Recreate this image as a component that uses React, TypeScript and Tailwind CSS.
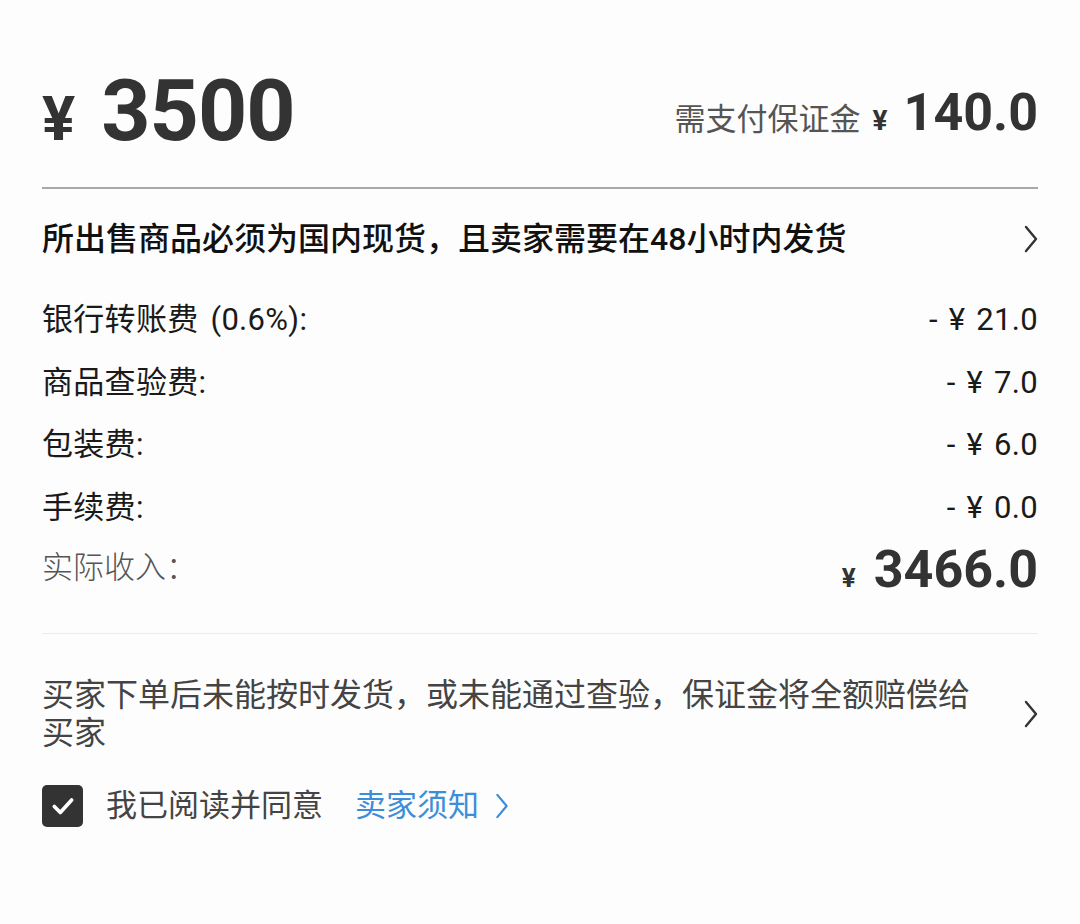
/** Seller listing confirmation: price, fees, deposit notice. */

function Chevron({ className }: { className?: string }) {
  return (
    <svg viewBox="0 0 14 28" className={className} fill="none" stroke="currentColor" strokeWidth="2.4" strokeLinecap="round" strokeLinejoin="round">
      <path d="M2 2 L12 14 L2 26" />
    </svg>
  );
}

const fees = [
  { label: "银行转账费 (0.6%):", value: "- ¥ 21.0" },
  { label: "商品查验费:", value: "- ¥ 7.0" },
  { label: "包装费:", value: "- ¥ 6.0" },
  { label: "手续费:", value: "- ¥ 0.0" },
];

export default function App() {
  return (
    <div
      className="w-[1080px] h-[924px] bg-[#fdfdfd] px-[42px] text-[#1a1a1a]"
      style={{ fontFamily: '"Roboto", "Noto Sans CJK SC", sans-serif' }}
    >
      {/* price header */}
      <div className="flex items-end justify-between pt-[68px] h-[154px]">
        <div className="flex items-baseline text-[#333]">
          <span className="text-[62px] font-bold leading-none">¥</span>
          <span className="ml-[26px] text-[86px] font-bold leading-none tracking-[-1px]">3500</span>
        </div>
        <div className="flex items-baseline text-[#333] mb-[15px]">
          <span className="text-[31px] text-[#555] leading-none">需支付保证金</span>
          <span className="ml-[12px] text-[28px] font-bold leading-none">¥</span>
          <span className="ml-[16px] text-[52px] font-bold leading-none">140.0</span>
        </div>
      </div>

      <div className="mt-[33px] h-[2px] bg-[#a8a8a8]" />

      <div className="flex items-center justify-between h-[100px]">
        <span className="text-[32px] font-medium text-[#111]">所出售商品必须为国内现货，且卖家需要在48小时内发货</span>
        <Chevron className="w-[14px] h-[28px] text-[#333]" />
      </div>

      {fees.map((f) => (
        <div key={f.label} className="flex items-center justify-between h-[62.5px] text-[31px] tracking-[0.3px]">
          <span className="[word-spacing:4px]">{f.label}</span>
          <span className="[word-spacing:3px]">{f.value}</span>
        </div>
      ))}

      <div className="flex items-center justify-between h-[62px]">
        <span className="text-[31px] text-[#555] font-light -mt-[4px]">实际收入：</span>
        <div className="flex items-baseline text-[#333]">
          <span className="text-[26px] font-bold leading-none">¥</span>
          <span className="ml-[18px] text-[52px] font-bold leading-none">3466.0</span>
        </div>
      </div>

      <div className="mt-[32px] h-px bg-[#ececec]" />

      <div className="flex items-center justify-between pt-[42px]">
        <p className="w-[940px] text-[32px] leading-[38px] text-[#444]">
          买家下单后未能按时发货，或未能通过查验，保证金将全额赔偿给买家
        </p>
        <Chevron className="w-[14px] h-[28px] text-[#333]" />
      </div>

      <div className="flex items-center mt-[31px]">
        <div className="w-[41px] h-[42px] rounded-[5px] bg-[#333] flex items-center justify-center">
          <svg viewBox="0 0 24 24" className="w-[26px] h-[26px]" fill="none" stroke="white" strokeWidth="3.4" strokeLinecap="round" strokeLinejoin="round">
            <path d="M4 12.5 L9.5 18 L20 6.5" />
          </svg>
        </div>
        <span className="ml-[23px] text-[31px] text-[#444]">我已阅读并同意</span>
        <span className="ml-[32px] text-[31px] text-[#3d8ed8]">卖家须知</span>
        <Chevron className="ml-[16px] w-[14px] h-[26px] text-[#3d8ed8]" />
      </div>
    </div>
  );
}
